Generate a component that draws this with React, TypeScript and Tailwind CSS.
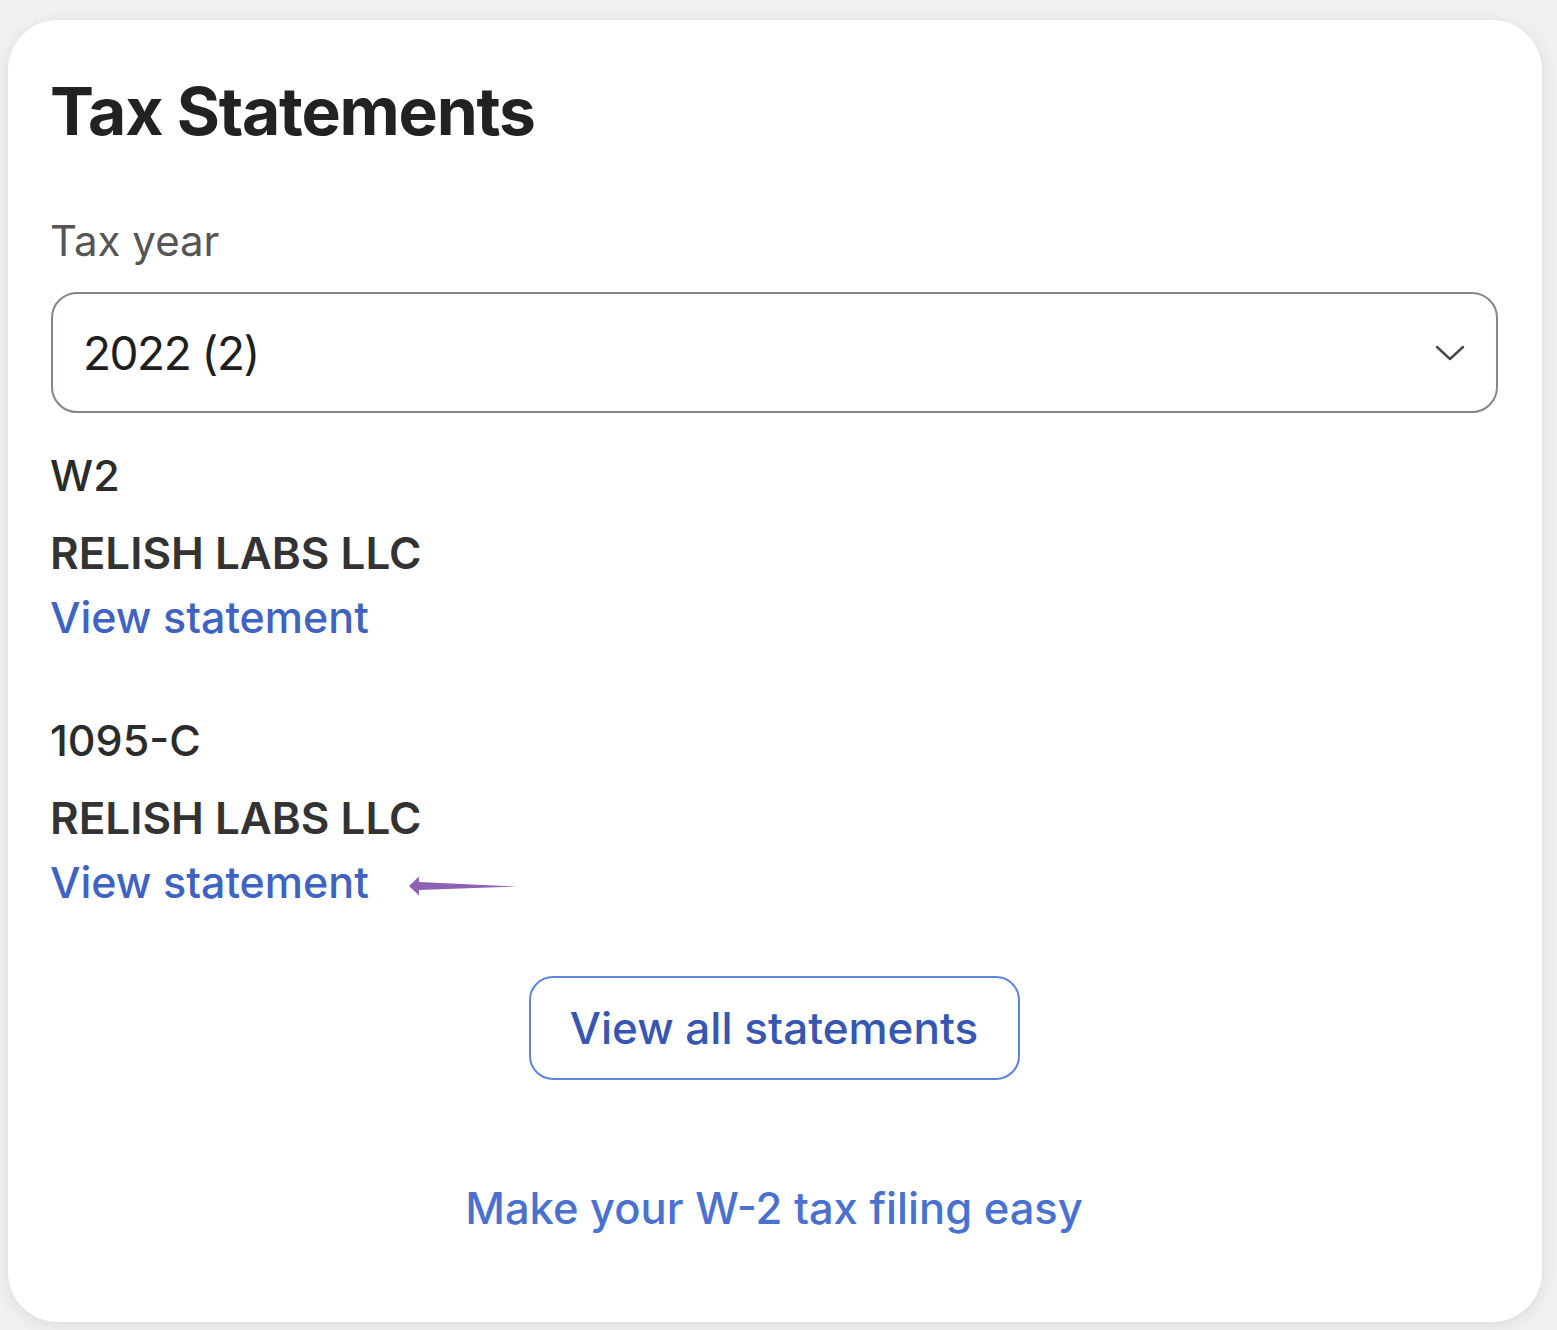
import React from 'react';

const font = { fontFamily: 'Inter, "Noto Sans", sans-serif' };

const Chevron = () => (
    <svg width="30" height="16" viewBox="0 0 30 16" fill="none" stroke="#4a4a4a" strokeWidth="2.5" strokeLinecap="round" strokeLinejoin="round">
        <path d="M2 2 L15 14 L28 2" />
    </svg>
);

const PointerArrow = () => (
    <svg width="108" height="22" viewBox="0 0 108 22" className="ml-[40px] mt-[6px]">
        <path d="M0 11 L10 1.5 L10 7 L108 11.5 L10 15 L10 20.5 Z" fill="#8d61b6" />
    </svg>
);

interface StatementProps {
    form: string;
    company: string;
    pointer?: boolean;
}

const Statement: React.FC<StatementProps> = ({ form, company, pointer }) => (
    <div className="flex flex-col">
        <div className="text-[43px] leading-none font-medium text-[#2b2b2b]">{form}</div>
        <div className="mt-[34px] text-[44px] leading-none font-semibold text-[#333]">{company}</div>
        <div className="mt-[21px] flex items-center">
            <a className="text-[43px] leading-none font-medium text-[#3f63c3]">View statement</a>
            {pointer && <PointerArrow />}
        </div>
    </div>
);

export default function App() {
    return (
        <div className="min-h-screen bg-[#f0f0f0] pt-[20px] pl-[8px]" style={font}>
            <div className="w-[1534px] h-[1302px] bg-white rounded-[50px] shadow-[0_3px_16px_rgba(0,0,0,0.09)] pl-[42px] pr-[44px] pt-[58px] flex flex-col">
                <h1 className="text-[66px] leading-none font-bold text-[#222] tracking-[-1.2px]">Tax Statements</h1>

                <label className="mt-[76px] text-[42px] leading-none text-[#555]">Tax year</label>

                <div className="mt-[30px] ml-[1px] h-[121px] w-[1447px] border-[2.5px] border-[#8a8580] rounded-[26px] flex items-center justify-between pl-[30px] pr-[31px]">
                    <span className="text-[46px] leading-none text-[#1e1e1e] tracking-[-1.5px]">2022 (2)</span>
                    <Chevron />
                </div>

                <div className="mt-[41px]">
                    <Statement form="W2" company="RELISH LABS LLC" />
                </div>
                <div className="mt-[80px]">
                    <Statement form="1095-C" company="RELISH LABS LLC" pointer />
                </div>

                <div className="flex flex-col items-center">
                    <button className="mt-[72px] w-[491px] h-[104px] border-[2.5px] border-[#5b86dc] rounded-[24px] text-[44px] font-medium text-[#3656b2]">
                        View all statements
                    </button>
                    <a className="mt-[107px] text-[43.5px] leading-none font-medium text-[#4a71cf]">Make your W-2 tax filing easy</a>
                </div>
            </div>
        </div>
    );
}
